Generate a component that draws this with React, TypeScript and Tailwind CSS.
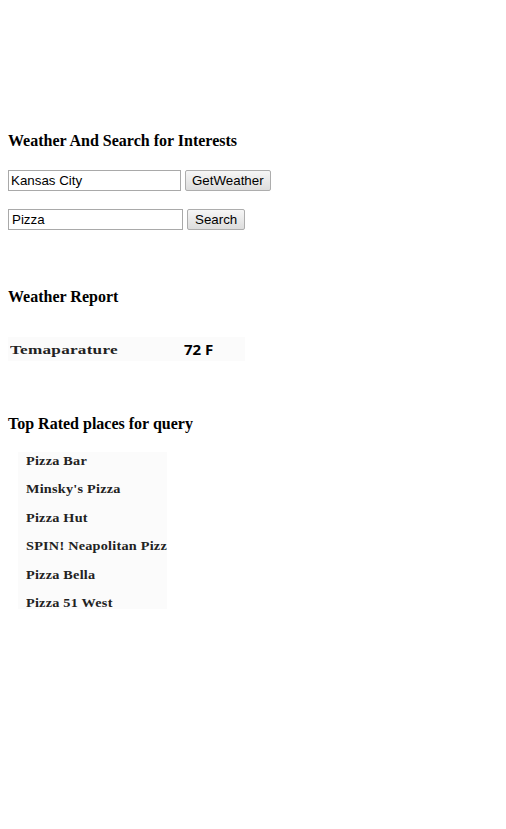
export default function App() {
  const places = [
    "Pizza Bar",
    "Minsky's Pizza",
    "Pizza Hut",
    "SPIN! Neapolitan Pizz",
    "Pizza Bella",
    "Pizza 51 West",
  ];

  return (
    <div className="min-h-screen bg-white px-2 pt-[131px] text-black">
      <h2 className="text-[16px] font-bold leading-5 font-['Liberation_Serif',serif]">
        Weather And Search for Interests
      </h2>

      <div className="mt-[19px] flex items-center gap-1 font-['Liberation_Sans',Arial,sans-serif] text-[13.33px]">
        <input
          defaultValue="Kansas City"
          className="h-[21px] w-[173px] border border-[#a9a9a9] px-[2px] outline-none"
        />
        <button className="h-[21px] rounded-[2px] border border-[#adadad] bg-gradient-to-b from-[#f6f6f6] to-[#dddddd] px-[6px] leading-none">
          GetWeather
        </button>
      </div>

      <div className="mt-[18px] flex items-center gap-1 font-['Liberation_Sans',Arial,sans-serif] text-[13.33px]">
        <input
          defaultValue="Pizza"
          className="h-[21px] w-[175px] border border-[#a9a9a9] px-[3px] outline-none"
        />
        <button className="h-[21px] rounded-[2px] border border-[#adadad] bg-gradient-to-b from-[#f6f6f6] to-[#dddddd] px-[7px] leading-none">
          Search
        </button>
      </div>

      <h2 className="mt-[57px] text-[16px] font-bold leading-5 font-['Liberation_Serif',serif]">
        Weather Report
      </h2>

      {/* temperature row */}
      <div className="mt-[30px] flex h-[24px] w-[237px] items-center bg-[#fbfbfb]">
        <div className="w-[176px] pl-[2px] leading-[18px]">
          <span className="inline-block origin-left scale-x-[1.27] text-[13.5px] font-bold tracking-[0.2px] text-[#222] font-['Liberation_Serif',serif]">
            Temaparature
          </span>
        </div>
        <span className="text-[15px] font-bold font-['Open_Sans',sans-serif]">
          72 F
        </span>
      </div>

      <h2 className="mt-[53px] text-[16px] font-bold leading-5 font-['Liberation_Serif',serif]">
        Top Rated places for query
      </h2>

      <ul className="mt-[18px] ml-[10px] h-[157px] w-[149px] bg-[#fbfbfb] pl-[8px] font-['Liberation_Serif',serif]">
        {places.map((p) => (
          <li
            key={p}
            className="h-[28.4px] text-[12.5px] leading-[18px] font-bold text-[#222] whitespace-nowrap"
          >
            <span className="inline-block origin-left scale-x-[1.14] tracking-[0.2px]">
              {p}
            </span>
          </li>
        ))}
      </ul>
    </div>
  );
}
